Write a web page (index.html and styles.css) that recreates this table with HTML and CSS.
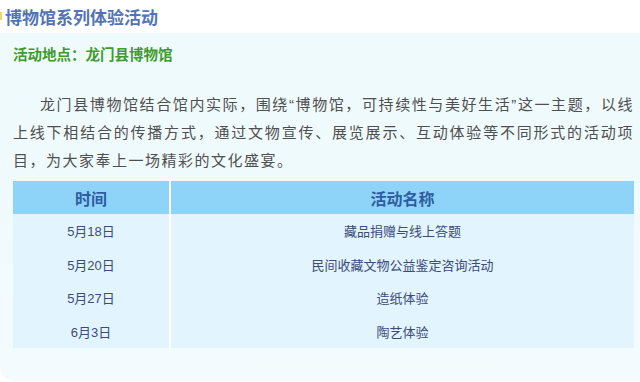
FILE: index.html
```html
<!DOCTYPE html>
<html lang="zh-CN">
<head>
<meta charset="utf-8">
<link rel="stylesheet" href="styles.css">
</head>
<body>
<div class="page">
  <h1 class="title"><span class="mark"></span>博物馆系列体验活动</h1>
  <div class="panel">
    <p class="place">活动地点：龙门县博物馆</p>
    <p class="intro">龙门县博物馆结合馆内实际，围绕“博物馆，可持续性与美好生活”这一主题，以线上线下相结合的传播方式，通过文物宣传、展览展示、互动体验等不同形式的活动项目，为大家奉上一场精彩的文化盛宴。</p>
    <table class="schedule">
      <thead>
        <tr><th class="c1">时间</th><th>活动名称</th></tr>
      </thead>
      <tbody>
        <tr><td class="c1">5月18日</td><td>藏品捐赠与线上答题</td></tr>
        <tr><td class="c1">5月20日</td><td>民间收藏文物公益鉴定咨询活动</td></tr>
        <tr><td class="c1">5月27日</td><td>造纸体验</td></tr>
        <tr><td class="c1">6月3日</td><td>陶艺体验</td></tr>
      </tbody>
    </table>
  </div>
</div>
</body>
</html>
```

FILE: styles.css
```css
html, body {
  margin: 0;
  padding: 0;
  background: #ffffff;
}
body {
  font-family: "Liberation Sans", "Noto Sans CJK SC", sans-serif;
  width: 640px;
  height: 382px;
  overflow: hidden;
}
.page {
  display: flex;
  flex-direction: column;
}
.title {
  margin: 0;
  height: 33px;
  display: flex;
  align-items: center;
  font-size: 17px;
  font-weight: bold;
  color: #5274b6;
  padding-bottom: 1px;
  box-sizing: border-box;
}
.mark {
  display: inline-block;
  width: 2px;
  height: 8px;
  background: #f3d27c;
  margin-right: 3px;
  align-self: center;
}
.panel {
  height: 348px;
  box-sizing: border-box;
  padding: 12px 6px 0 13px;
  background: linear-gradient(#eefafc, #f3fbfd);
  border-bottom-left-radius: 15px;
}
.place {
  margin: 0;
  font-size: 14.5px;
  line-height: 20px;
  font-weight: bold;
  color: #3e9b2e;
}
.intro {
  margin: 26px 0 0 0;
  font-size: 15px;
  line-height: 28px;
  letter-spacing: 1.5px;
  text-indent: 27px;
  text-align: justify;
  color: #4f4f4f;
}
.schedule {
  margin-top: 6px;
  width: 621px;
  border-collapse: collapse;
  table-layout: fixed;
}
.schedule th, .schedule td {
  padding: 0;
  text-align: center;
}
.schedule .c1 {
  width: 156px;
  border-right: 2px solid #ffffff;
}
.schedule th {
  height: 33px;
  background: #8ed4f9;
  color: #2f5ca2;
  font-size: 16px;
  font-weight: bold;
}
.schedule td {
  height: 33.5px;
  background: #e2f4fd;
  color: #3c4b7a;
  font-size: 13px;
}
```
